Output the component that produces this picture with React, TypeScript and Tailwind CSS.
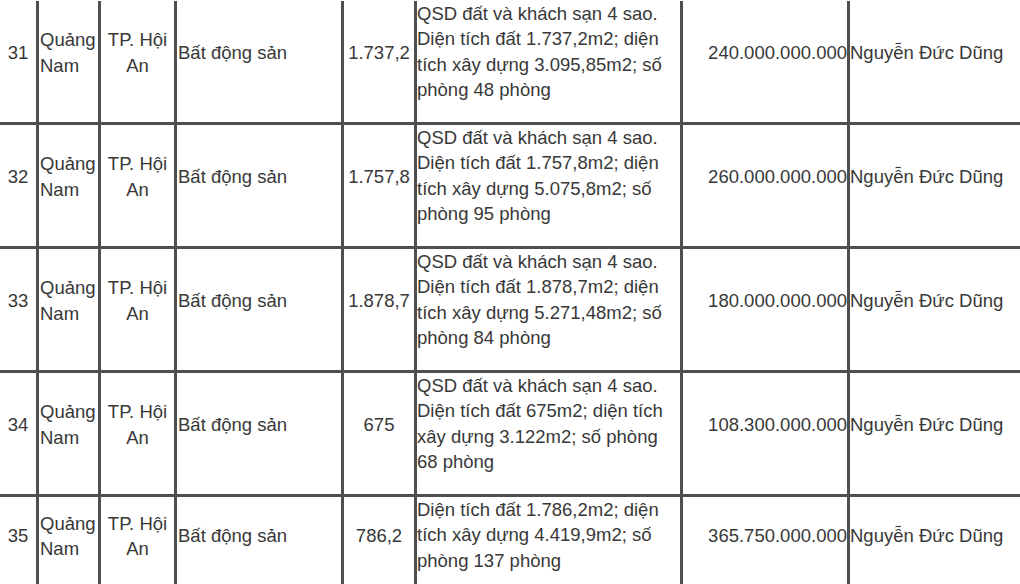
import React from "react";

type Row = {
  no: string;
  area: string;
  lines: string[];
  price: string;
};

const rows: Row[] = [
  {
    no: "31",
    area: "1.737,2",
    lines: [
      "QSD đất và khách sạn 4 sao.",
      "Diện tích đất 1.737,2m2; diện",
      "tích xây dựng 3.095,85m2; số",
      "phòng 48 phòng",
    ],
    price: "240.000.000.000",
  },
  {
    no: "32",
    area: "1.757,8",
    lines: [
      "QSD đất và khách sạn 4 sao.",
      "Diện tích đất 1.757,8m2; diện",
      "tích xây dựng 5.075,8m2; số",
      "phòng 95 phòng",
    ],
    price: "260.000.000.000",
  },
  {
    no: "33",
    area: "1.878,7",
    lines: [
      "QSD đất và khách sạn 4 sao.",
      "Diện tích đất 1.878,7m2; diện",
      "tích xây dựng 5.271,48m2; số",
      "phòng 84 phòng",
    ],
    price: "180.000.000.000",
  },
  {
    no: "34",
    area: "675",
    lines: [
      "QSD đất và khách sạn 4 sao.",
      "Diện tích đất 675m2; diện tích",
      "xây dựng 3.122m2; số phòng",
      "68 phòng",
    ],
    price: "108.300.000.000",
  },
  {
    no: "35",
    area: "786,2",
    lines: [
      "Diện tích đất 1.786,2m2; diện",
      "tích xây dựng 4.419,9m2; số",
      "phòng 137 phòng",
    ],
    price: "365.750.000.000",
  },
];

function Mid({
  tall,
  align,
  children,
}: {
  tall: boolean;
  align: string;
  children: React.ReactNode;
}) {
  return (
    <div className="bg-white">
      <div
        className={`flex flex-col justify-center ${align} ${
          tall ? "h-[103px]" : "h-[78px]"
        }`}
      >
        {children}
      </div>
    </div>
  );
}

export default function App() {
  return (
    <div
      className="h-[584px] w-[1020px] overflow-hidden bg-white text-[18.5px] leading-[25.3px] text-[#383838]"
      style={{ fontFamily: '"Liberation Sans", Arial, sans-serif' }}
    >
      <div className="mt-[1px] grid w-[1020px] grid-cols-[36px_59px_73px_164px_70px_263px_164px_170px] auto-rows-[121px] gap-[3px] bg-[#4f4f4f]">
        {rows.map((row) => {
          const tall = row.lines.length === 4;
          return (
            <React.Fragment key={row.no}>
              <Mid tall={tall} align="items-center text-center">
                {row.no}
              </Mid>
              <Mid tall={tall} align="items-start pl-[1px]">
                <span>Quảng</span>
                <span>Nam</span>
              </Mid>
              <Mid tall={tall} align="items-center text-center">
                <span>TP. Hội</span>
                <span>An</span>
              </Mid>
              <Mid tall={tall} align="items-start pl-[1px]">
                Bất động sản
              </Mid>
              <Mid tall={tall} align="items-center text-center">
                {row.area}
              </Mid>
              <div className="bg-white">
                <div className="flex flex-col whitespace-nowrap">
                  {row.lines.map((line) => (
                    <span key={line}>{line}</span>
                  ))}
                </div>
              </div>
              <Mid tall={tall} align="items-end text-right">
                {row.price}
              </Mid>
              <Mid tall={tall} align="items-start whitespace-nowrap">
                Nguyễn Đức Dũng
              </Mid>
            </React.Fragment>
          );
        })}
      </div>
    </div>
  );
}
